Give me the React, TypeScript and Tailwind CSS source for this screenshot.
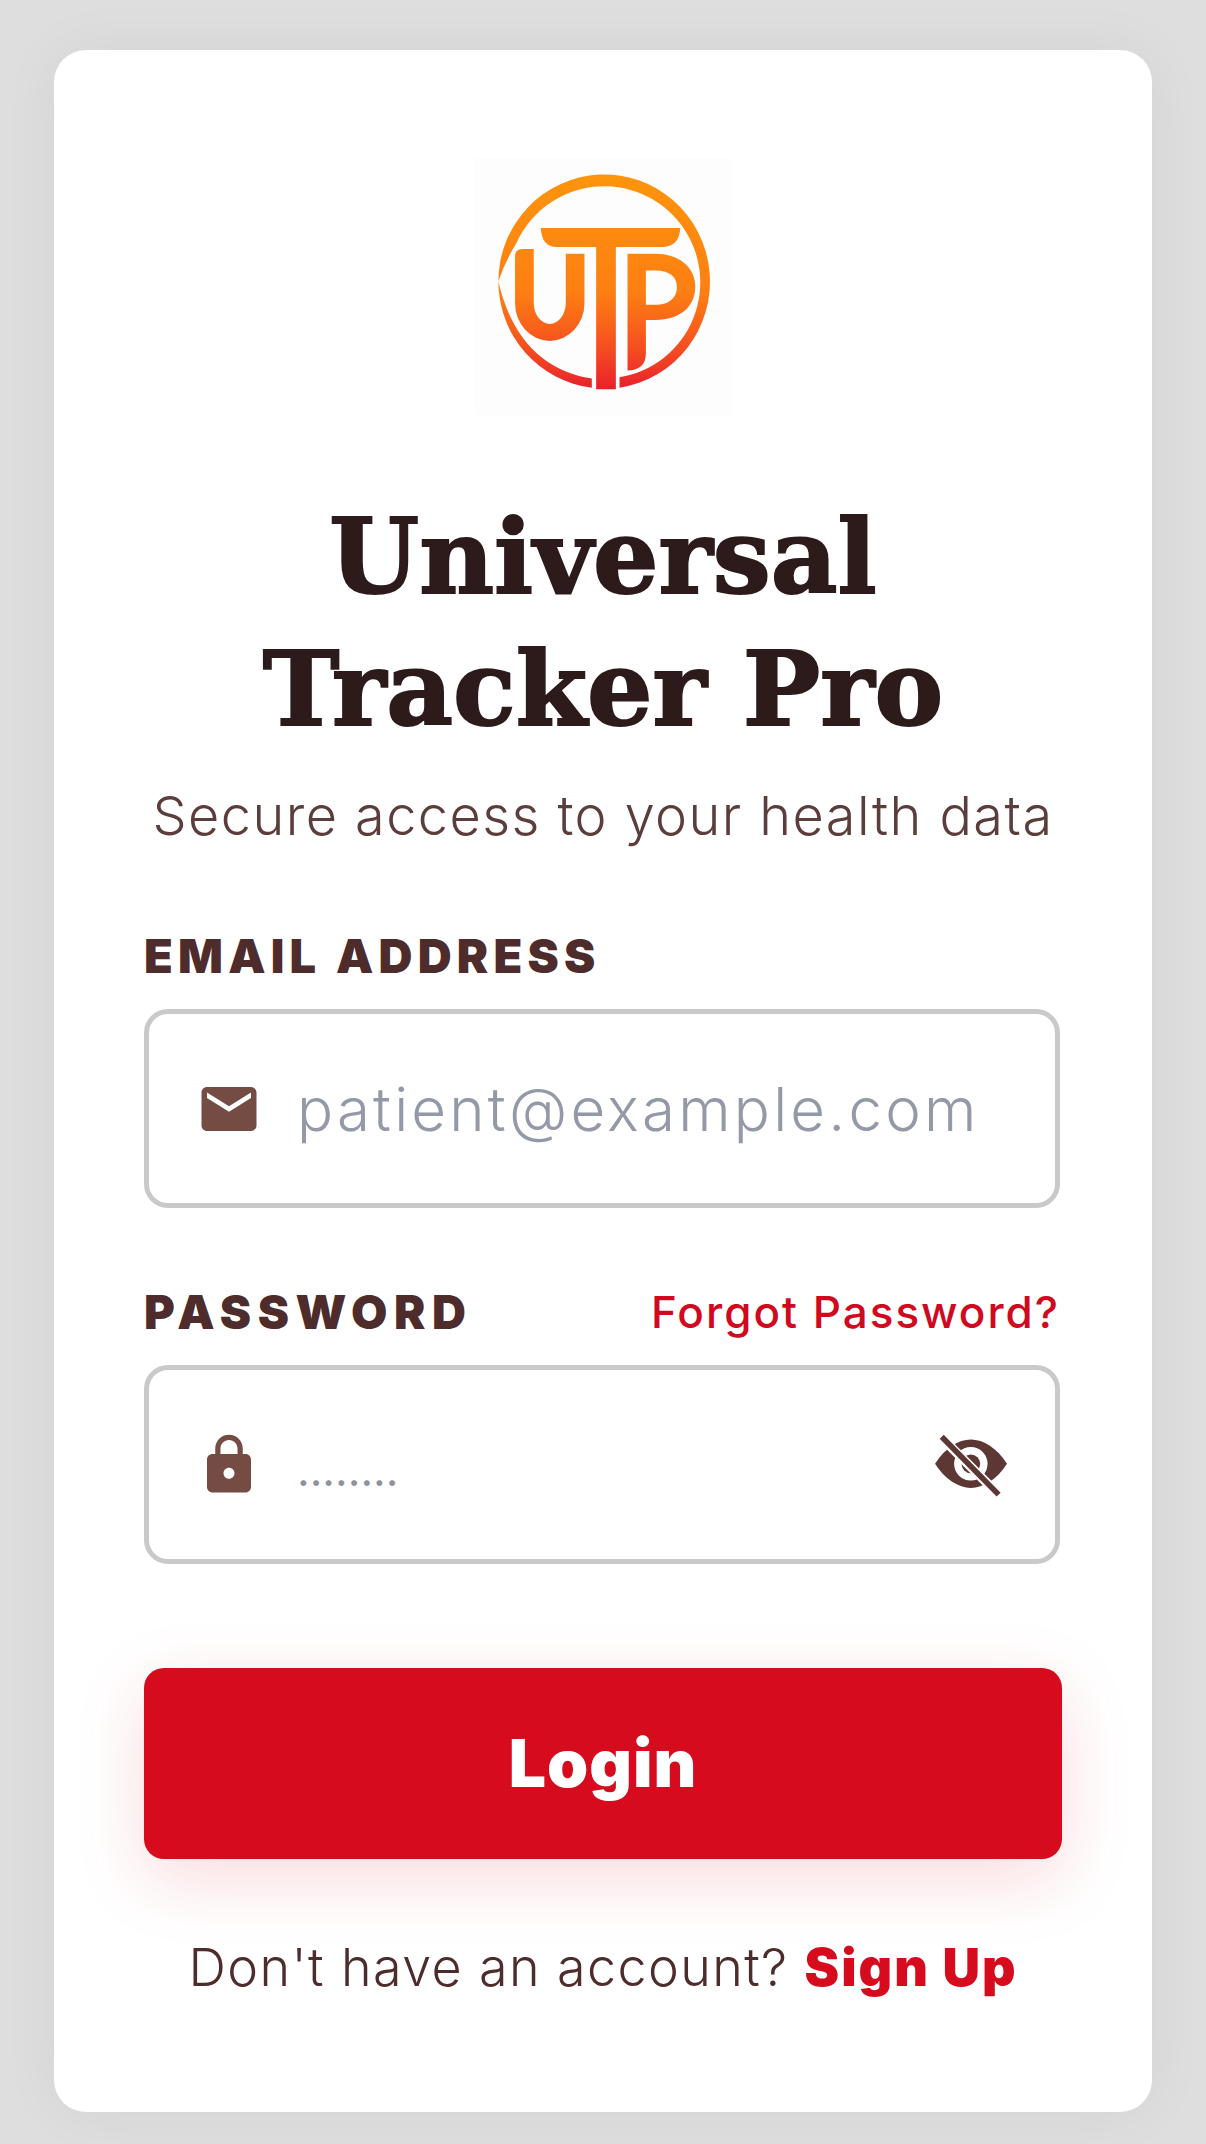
const brown = "#4a2a28";

function UtpLogo() {
  return (
    <div className="flex h-[257px] w-[257px] items-center justify-center bg-[#fdfdfd]">
      <svg viewBox="100 55 770 770" className="h-[257px] w-[257px]">
        <defs>
          <linearGradient id="utp" gradientUnits="userSpaceOnUse" x1="0" y1="100" x2="0" y2="750">
            <stop offset="0" stopColor="#fd950c" />
            <stop offset="0.55" stopColor="#fd7f12" />
            <stop offset="0.8" stopColor="#f5501f" />
            <stop offset="1" stopColor="#e81f2d" />
          </linearGradient>
        </defs>
        <g fill="url(#utp)">
          {/* ring */}
          <path d="M533 743A317 321 0 1 0 170 425Q190 365 225 308A288 288 0 1 1 533 712Z" />
          <path d="M170 425A317 321 0 0 0 450 743L450 716Q230 680 170 425Z" />
          {/* U */}
          <path d="M220 350Q220 328 242 328H276V490A48 62 0 0 0 372 490V342H428V490A104 113 0 0 1 220 490Z" />
          {/* T */}
          <path d="M297 265H715Q712 322 660 322H522V748H463V322H345Q300 322 297 265Z" />
          {/* P */}
          <path
            fillRule="evenodd"
            d="M557 342H640C715 342 760 385 760 440C760 500 715 540 640 540H612V640Q612 690 557 692ZM612 392V495H640C685 495 705 470 705 442C705 412 685 392 640 392Z"
          />
        </g>
      </svg>
    </div>
  );
}

function MailIcon() {
  return (
    <svg viewBox="0 0 24 24" className="h-[66px] w-[66px] shrink-0" fill="#754c44">
      <path d="M20 4H4c-1.1 0-2 .9-2 2v12c0 1.1.9 2 2 2h16c1.1 0 2-.9 2-2V6c0-1.1-.9-2-2-2zm0 4l-8 5-8-5V6l8 5 8-5v2z" />
    </svg>
  );
}

function LockIcon() {
  return (
    <svg viewBox="0 0 24 24" className="h-[66px] w-[66px] shrink-0" fill="#754c44">
      <path d="M18 8h-1V6c0-2.76-2.24-5-5-5S7 3.24 7 6v2H6c-1.1 0-2 .9-2 2v10c0 1.1.9 2 2 2h12c1.1 0 2-.9 2-2V10c0-1.1-.9-2-2-2zm-6 9c-1.1 0-2-.9-2-2s.9-2 2-2 2 .9 2 2-.9 2-2 2zm3.1-9H8.9V6c0-1.71 1.39-3.1 3.1-3.1 1.71 0 3.1 1.39 3.1 3.1v2z" />
    </svg>
  );
}

function EyeOffIcon() {
  return (
    <svg viewBox="150 100 245 200" className="h-[67px] w-[82px] shrink-0">
      <path
        fill="#5c3733"
        d="M165 198C195 150 235 125 272 125C310 125 350 150 380 198C350 245 310 270 272 270C235 270 195 245 165 198Z"
      />
      <circle cx="272" cy="198" r="50" fill="#fff" />
      <circle cx="272" cy="198" r="28" fill="#5c3733" />
      <path d="M175 110L360 295" stroke="#fff" strokeWidth="28" />
      <path d="M185 117L355 290" stroke="#5c3733" strokeWidth="17" />
    </svg>
  );
}

export default function App() {
  return (
    <div
      className="flex h-[2144px] w-[1206px] bg-[#dedede] px-[54px] pt-[50px] pb-[32px]"
      style={{ fontFamily: "Inter, sans-serif", color: brown }}
    >
      <div className="flex w-full flex-col items-center rounded-[32px] bg-white px-[90px] pt-[108px] shadow-[0_0_60px_rgba(0,0,0,0.05)]">
        <UtpLogo />

        <h1 className="mt-[76px] text-center font-['DejaVu_Serif',serif] text-[103px] leading-[132px] font-bold whitespace-nowrap text-[#2d1a1a] [-webkit-text-stroke:2px_#2d1a1a]">
          Universal
          <br />
          Tracker Pro
        </h1>

        <p className="mt-[26px] text-center text-[54px] leading-[70px] font-light tracking-[1.45px] whitespace-nowrap text-[#5b3d3b]">
          Secure access to your health data
        </p>

        <form className="mt-[77px] flex w-full flex-col">
          <label className="text-[47px] leading-[56px] font-black tracking-[5.2px] text-[#4d2c2b]">EMAIL ADDRESS</label>
          <div className="mt-[25px] flex h-[199px] w-[916px] items-center rounded-[24px] border-[5px] border-[#c9c9c9] pl-[47px]">
            <MailIcon />
            <input
              type="text"
              placeholder="patient@example.com"
              className="ml-[35px] w-[740px] text-[60px] font-light tracking-[3.2px] outline-none placeholder:text-[#9399a6]"
            />
          </div>

          <div className="mt-[71px] flex w-[916px] items-center justify-between">
            <label className="text-[47px] leading-[56px] font-black tracking-[6.6px] text-[#4d2c2b]">PASSWORD</label>
            <a className="text-[44px] font-medium tracking-[2px] text-[#d0091f]">Forgot Password?</a>
          </div>
          <div className="mt-[20px] flex h-[199px] w-[916px] items-center rounded-[24px] border-[5px] border-[#c9c9c9] pr-[43px] pl-[47px]">
            <LockIcon />
            <input
              type="password"
              placeholder="........"
              className="ml-[35px] min-w-0 flex-1 pt-[10px] text-[44px] outline-none placeholder:text-[#8e919e]"
            />
            <EyeOffIcon />
          </div>

          <button
            type="button"
            className="mt-[104px] h-[191px] w-full rounded-[20px] bg-[#d60b1e] text-[66px] font-black tracking-[1px] text-white shadow-[0_20px_70px_rgba(214,11,30,0.15)]"
          >
            Login
          </button>

          <p className="mt-[79px] text-center text-[52px] leading-[60px] font-light tracking-[1.4px] whitespace-nowrap text-[#4d2c2b]">
            Don't have an account? <span className="font-black tracking-[2px] text-[#d60b1e]">Sign Up</span>
          </p>
        </form>
      </div>
    </div>
  );
}
